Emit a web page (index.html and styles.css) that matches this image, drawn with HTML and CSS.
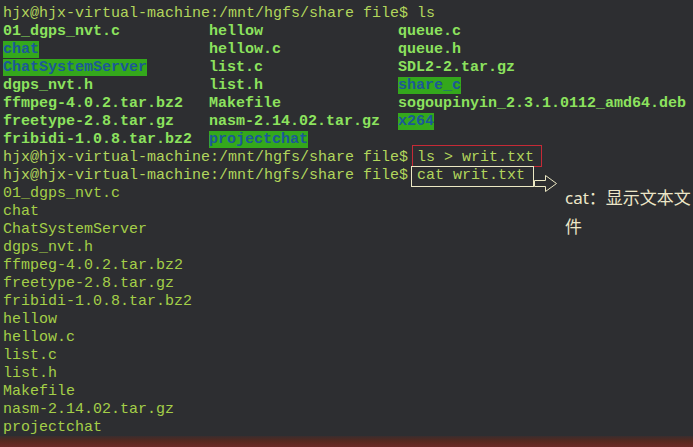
FILE: index.html
```html
<!DOCTYPE html>
<html lang="zh">
<head>
<meta charset="utf-8">
<title>terminal</title>
<link rel="stylesheet" href="styles.css">
</head>
<body>
<div class="screen">
  <div class="term">
    <div class="line prompt">hjx@hjx-virtual-machine:/mnt/hgfs/share file$ ls</div>
    <div class="listing">
      <span>01_dgps_nvt.c</span><span>hellow</span><span>queue.c</span>
      <span><i class="hl">chat</i></span><span>hellow.c</span><span>queue.h</span>
      <span><i class="hl">ChatSystemServer</i></span><span>list.c</span><span>SDL2-2.tar.gz</span>
      <span>dgps_nvt.h</span><span>list.h</span><span><i class="hl">share_c</i></span>
      <span>ffmpeg-4.0.2.tar.bz2</span><span>Makefile</span><span>sogoupinyin_2.3.1.0112_amd64.deb</span>
      <span>freetype-2.8.tar.gz</span><span>nasm-2.14.02.tar.gz</span><span><i class="hl">x264</i></span>
      <span>fribidi-1.0.8.tar.bz2</span><span><i class="hl">projectchat</i></span><span></span>
    </div>
    <div class="line prompt">hjx@hjx-virtual-machine:/mnt/hgfs/share file$ ls &gt; writ.txt</div>
    <div class="line prompt">hjx@hjx-virtual-machine:/mnt/hgfs/share file$ cat writ.txt</div>
    <div class="line out">01_dgps_nvt.c</div>
    <div class="line out">chat</div>
    <div class="line out">ChatSystemServer</div>
    <div class="line out">dgps_nvt.h</div>
    <div class="line out">ffmpeg-4.0.2.tar.bz2</div>
    <div class="line out">freetype-2.8.tar.gz</div>
    <div class="line out">fribidi-1.0.8.tar.bz2</div>
    <div class="line out">hellow</div>
    <div class="line out">hellow.c</div>
    <div class="line out">list.c</div>
    <div class="line out">list.h</div>
    <div class="line out">Makefile</div>
    <div class="line out">nasm-2.14.02.tar.gz</div>
    <div class="line out">projectchat</div>

    <div class="box box-red"></div>
    <div class="box box-white"></div>
    <svg class="arrow" width="26" height="20" viewBox="0 0 26 20">
      <polygon points="0.5,6.5 11.5,6.5 11.5,1.5 22.5,9.5 11.5,17.5 11.5,12.5 0.5,12.5" fill="none" stroke="#ece8c4" stroke-width="1"/>
    </svg>
    <div class="note">cat：显示文本文<br>件</div>
  </div>
  <div class="desktop"></div>
</div>
</body>
</html>
```
FILE: styles.css
```css
html, body {
  margin: 0;
  padding: 0;
}
body {
  background: #2d2e31;
  width: 693px;
  height: 447px;
  overflow: hidden;
}
.screen {
  display: flex;
  flex-direction: column;
  height: 447px;
}
.term {
  position: relative;
  flex: 1;
  min-height: 0;
  overflow: hidden;
  padding: 5px 0 0 3px;
  font-family: "Liberation Mono", monospace;
  font-size: 15px;
  line-height: 18px;
}
.line {
  height: 18px;
  white-space: pre;
}
.prompt {
  color: #b2d65c;
}
.out {
  color: #a4cf48;
}
.listing {
  display: grid;
  grid-template-columns: 206px 189px auto;
  grid-auto-rows: 18px;
  font-weight: bold;
  color: #8ce25e;
  white-space: pre;
}
.hl {
  font-style: normal;
  background: #34a81c;
  color: #1c5898;
}
.box {
  position: absolute;
  box-sizing: border-box;
}
.box-red {
  left: 412px;
  top: 145px;
  width: 130px;
  height: 22px;
  border: 1px solid #c62a36;
}
.box-white {
  left: 411px;
  top: 166px;
  width: 123px;
  height: 21px;
  border: 1px solid #ece8c4;
}
.arrow {
  position: absolute;
  left: 534px;
  top: 174px;
}
.note {
  position: absolute;
  left: 565px;
  top: 183px;
  font-family: "Noto Sans", "Noto Sans CJK SC", sans-serif;
  font-size: 17px;
  line-height: 29px;
  color: #ece6c8;
  white-space: nowrap;
}
.desktop {
  height: 11px;
  flex: none;
  background: linear-gradient(#3a2d2e 0%, #55291f 45%, #6a2a26 100%);
}
```
